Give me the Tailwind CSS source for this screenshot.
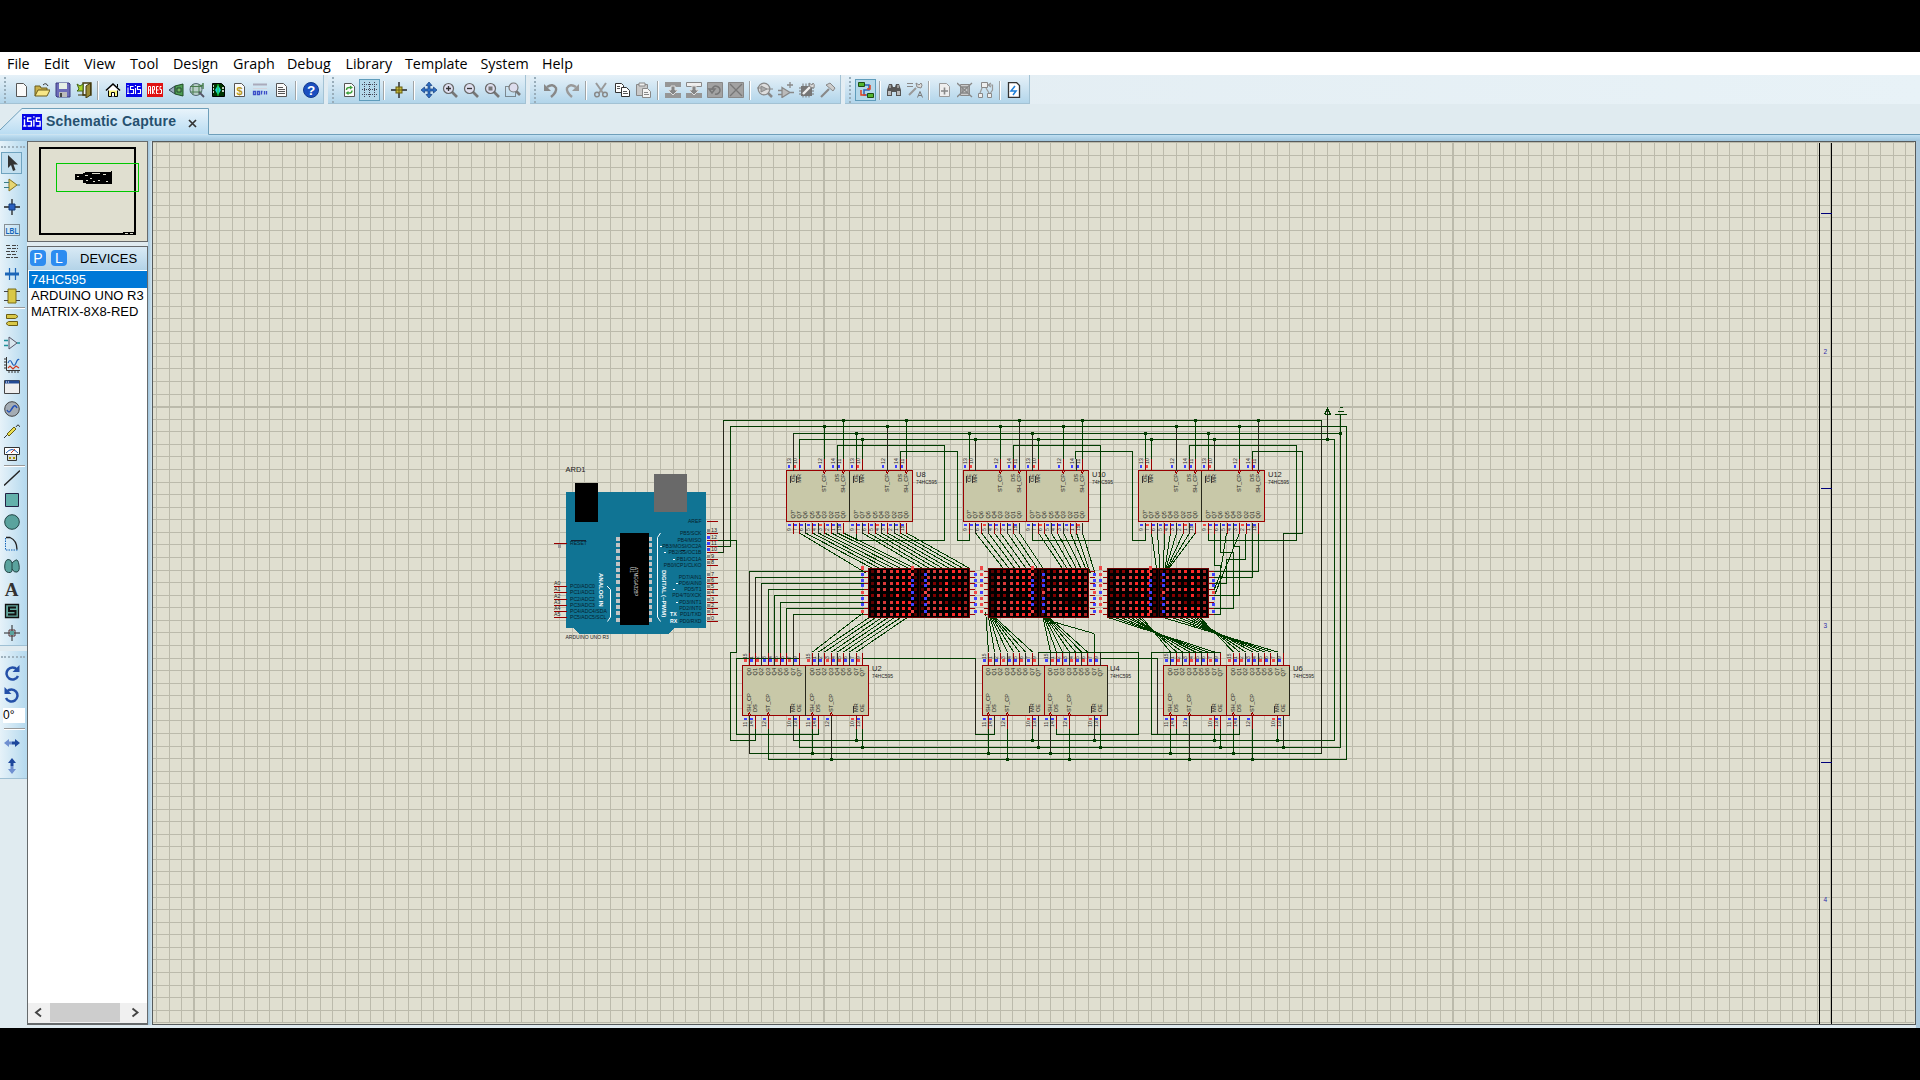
<!DOCTYPE html>
<html lang="en">
<head>
<meta charset="utf-8">
<title>Schematic Capture</title>
<script src="https://cdn.jsdelivr.net/npm/@tailwindcss/browser@4"></script>
</head>
<body class="bg-black w-[1920px] h-[1080px] overflow-hidden pt-[52px] font-['Liberation_Sans',sans-serif]">
<div class="w-full h-[976px] bg-[#e0ebf0] flex flex-col">

  <nav class="h-[23px] bg-white flex items-center pl-[7px] text-[14.3px] text-black font-['Open_Sans','Noto_Sans',sans-serif] shrink-0 leading-none pt-[2px]">
    <span class="w-[37px]">File</span><span class="w-[40px]">Edit</span><span class="w-[46px]">View</span><span class="w-[43px]">Tool</span><span class="w-[60px]">Design</span><span class="w-[54px]">Graph</span><span class="w-[58.5px]">Debug</span><span class="w-[59.5px]">Library</span><span class="w-[75.500px]">Template</span><span class="w-[61.500px]">System</span><span>Help</span>
  </nav>

  <div id="bars" class="h-[29px] flex gap-1 shrink-0 bg-gradient-to-r from-[#e0eaf0] to-[#e8f2f7]"></div>

  <div class="h-[31px] shrink-0 relative flex items-end">
    <svg class="absolute left-0 top-0 w-[1920px] h-[31px]" viewBox="0 104 1920 31">
      <defs><linearGradient id="tg" x1="0" y1="0" x2="0" y2="1"><stop offset="0" stop-color="#e9f4fb"/><stop offset="1" stop-color="#b9dcf2"/></linearGradient></defs>
      <path d="M0 134.500V130L22 108.500H208.500V134.500Z" fill="url(#tg)"/>
      <path d="M0 130L22 108.500H208.500V134.500H1920" fill="none" stroke="#6f9fba"/>
    </svg>
    <div class="relative flex items-center h-[27px] pl-[22px] text-[#25506f]">
      <span data-icon="isis" class="w-[20px] h-[16px]"></span>
      <span class="text-[14px] font-bold tracking-[0.2px] ml-[4px] w-[142px] whitespace-nowrap">Schematic Capture</span>
      <svg class="w-[9px] h-[9px] mt-[3px]" viewBox="0 0 9 9"><path d="M1 1L8 8M8 1L1 8" stroke="#333" stroke-width="1.700"/></svg>
    </div>
  </div>
  <div class="h-[6px] shrink-0 bg-gradient-to-b from-[#c0e0f3] to-[#9fc4dc]"></div>

  <main class="flex h-[887px] bg-[#e0ebf0]">
    <aside class="w-[27px] shrink-0 flex flex-col">
      <div id="side" class="w-[27px] h-[505px] bg-gradient-to-r from-[#e6f2f9] to-[#b4d9ee] flex flex-col items-start pl-px border-b border-[#9fc0d4]"></div>
      <div id="side2" class="mt-[5px] w-[27px] h-[128px] bg-gradient-to-r from-[#e6f2f9] to-[#b4d9ee] flex flex-col items-start pl-px border-b border-[#9fc0d4]"></div>
    </aside>
    <section class="w-[121px] shrink-0 flex flex-col gap-[4px] h-[884px]">
      <div class="h-[101px] border border-[#666a6c] bg-[#e0dfd0] shrink-0">
        <svg class="w-[119px] h-[99px]" viewBox="28 142 119 99" shape-rendering="crispEdges">
          <rect x="40" y="148" width="95" height="86" fill="none" stroke="#000" stroke-width="2"/>
          <rect x="123" y="232" width="11" height="3"/><path d="M125 233.500h3M130 233.500h3" stroke="#e0dfd0"/>
          <rect x="75" y="174" width="8" height="6"/><rect x="83" y="172" width="29" height="12"/>
          <path d="M77 176.500h2M85 175.500h3M92 173.500h8M103 174.500h3M86 180.500h2M93 181.500h2M98 180.500h2M106 181.500h2M90 178.500h2M83 183.500h3M83 172.500h2" stroke="#e0dfd0"/>
          <path d="M111.500 171v3" stroke="#000"/>
          <rect x="56.500" y="163.500" width="82" height="28" fill="none" stroke="#00c800"/>
        </svg>
      </div>
      <div class="grow border border-b-2 border-[#666a6c] bg-white flex flex-col overflow-hidden">
        <div class="h-[23px] shrink-0 bg-gradient-to-b from-[#d9eaf5] to-[#b3d3e8] flex items-center pl-[2px] pb-px text-white text-[13px] leading-none">
          <span class="w-[16px] h-[16px] rounded bg-[#2d8cf0] flex items-center justify-center text-[14px]">P</span>
          <span class="w-[16px] h-[16px] rounded bg-[#2d8cf0] flex items-center justify-center text-[14px] ml-[5px]">L</span>
          <span class="text-black ml-[13px] text-[13px]">DEVICES</span>
        </div>
        <div class="text-[13px] leading-[16px] text-black whitespace-nowrap pl-px pt-px">
          <div class="bg-[#0078d7] text-white pl-[2px] pt-px">74HC595</div>
          <div class="pl-[2px]">ARDUINO UNO R3</div>
          <div class="pl-[2px]">MATRIX-8X8-RED</div>
        </div>
        <div class="mt-auto h-[20px] bg-[#f0f0f0] flex items-start">
          <svg class="w-[22px] h-[19px]" viewBox="0 0 22 19"><path d="M13 5.500L8 9.500L13 13.500" fill="none" stroke="#444" stroke-width="1.900"/></svg>
          <div class="w-[70px] h-[19px] bg-[#cdcdcd]"></div>
          <svg class="w-[27px] h-[19px]" viewBox="0 0 27 19"><path d="M12.500 5.500L17.500 9.500L12.500 13.500" fill="none" stroke="#444" stroke-width="1.900"/></svg>
        </div>
      </div>
    </section>
    <div class="w-[4px] h-[884px] bg-gradient-to-r from-[#9fc4dc] to-[#d4e6f0] shrink-0"></div>
    <section class="w-[1764px] h-[884px] border border-[#565b5c] bg-[#e0dfd0] shrink-0">
      <svg id="sheet" class="block w-[1762px] h-[882px]" viewBox="153 142 1762 882" font-family="Liberation Sans, Arial, sans-serif"></svg>
    </section>
    <div class="w-[4px] h-[887px] bg-[#abc9dd]"></div>
  </main>
</div>

<script>
const page = '<path d="M3.500 1.500h7l3 3v10h-10z" fill="#fafafa" stroke="#555"/>';
const gpage = '<path d="M3.500 1.500h7l3 3v10h-10z" fill="#eee" stroke="#999"/>';
const mag = '<path d="M10 10l5 5" stroke="#777" stroke-width="2.600"/><circle cx="6.500" cy="6.500" r="5" fill="#dde" stroke="#666" stroke-width="1.200"/>';
const I = {
 new: page,
 open: '<path d="M1 14V4h5l1 2h6v2" fill="#c9b04a" stroke="#6b5d1c"/><path d="M1 14l3-6h12l-3 6z" fill="#f7e687" stroke="#6b5d1c"/><path d="M9 3q3-3 5 1" fill="none" stroke="#333"/>',
 save: '<path d="M1 1h13l1 1v13H2l-1-1z" fill="#6c6bb8" stroke="#3d3c80"/><path d="M4 1h8v6H4z" fill="#e6f0e6"/><path d="M4 10h8v5H4z" fill="#bbb"/><path d="M5 11h2v4H5z" fill="#444"/>',
 exit: '<path d="M7 1h8v12H7z" fill="#eef4f8" stroke="#443b0e" stroke-width="1.400"/><path d="M10 4l4.500-3v12l-4.500 3z" fill="#9a8b35" stroke="#443b0e"/><path d="M1 2l3 2 3-2v7H1l2-2z" fill="#a9d62a" stroke="#44661a"/><path d="M2 13h7" stroke="#443b0e"/>',
 home: '<path d="M3.500 8v6.500h9V8" fill="#f8f27c" stroke="#000"/><path d="M1 8.500L8 2l7 6.500" fill="#fff" stroke="#000" stroke-width="1.600"/><path d="M6.500 14.500v-4h3v4M12.500 2v3" fill="#fff" stroke="#000"/>',
 isis: '<path d="M0 1h16v14H0z" fill="#0505e6"/><path d="M2 5.500v6M1 11.500h2.500M2 3v1M7.500 4.500h-3v3h3v4h-3M9.500 6v6M9.500 3v1M14.500 4.500h-3v3h3v4h-3" stroke="#fff" fill="none" stroke-width="1.100"/>',
 ares: '<path d="M0 1h16v14H0z" fill="#e01212"/><path d="M1.500 12V4.500h2V12M1.500 8h2M5.500 12V4.500h2V8h-2l2 4M11.500 4.500h-2v7h2M9.500 8h2M14.500 4.500h-1.500v3h1.500v4h-2" stroke="#fff" fill="none"/>',
 cone: '<path d="M1 8l6-4v8z" fill="#9ab" stroke="#345"/><path d="M7 4l8-2v12l-8-2z" fill="#4f9d54" stroke="#1f4d25"/><path d="M9 6h4v4H9z" fill="#7b6" stroke="#243"/>',
 globe: '<circle cx="7" cy="7.500" r="6" fill="#b8cfc8" stroke="#567"/><path d="M1 4.500h12M1 10h12M4 2v11M10 2v11" stroke="#4b7d50"/><path d="M10 10l5 5" stroke="#556" stroke-width="1.800"/><path d="M11 3.500h3M14 1v6" stroke="#4b7d50" stroke-width="1.500"/>',
 chip: '<path d="M2.500 1.500h9l3 3v10h-12z" fill="#030" stroke="#000"/><path d="M3 4h1M3 7h1M3 10h1M12 6h2M12 9h2" stroke="#fff" stroke-width="1.500"/><path d="M8 3l3 5-3 5-3-5z" fill="#18d0d8"/><path d="M8 2v12" stroke="#1bd41b"/>',
 bill: page + '<text x="8.500" y="12.500" font-size="11" font-weight="bold" text-anchor="middle" fill="#b99a1c">$</text>',
 code: '<path d="M1 2.500h14" stroke="#aab" stroke-width="2"/><path d="M1 6.500h14" stroke="#d5d5dd"/><path d="M1.500 9.500h2v3h-2zM5.500 9.500h2v3h-2zM9.500 12.500v-3h1M12.500 9v3.500M14.500 9v3.500" fill="none" stroke="#3c4fc8" stroke-width="1.300"/>',
 notes: page + '<path d="M5 5.500h5M5 7.500h7M5 9.500h7M5 11.500h7" stroke="#555"/>',
 help: '<circle cx="8" cy="8" r="7.500" fill="#1b4fc0" stroke="#113a8c"/><text x="8" y="12.800" font-size="13.500" font-weight="bold" text-anchor="middle" fill="#fff">?</text>',
 refresh: page + '<path d="M5.500 8q0-3 4-2.500M11 8.500q0 3-4 2.500" fill="none" stroke="#3aa03a" stroke-width="1.500"/><path d="M9 3.500l3 2-3 2zM7.500 9l-3 2 3 2z" fill="#3aa03a"/>',
 grid: '<g shape-rendering="crispEdges"><path d="M0 2.500h16M0 7.500h16M0 12.500h16" stroke="#445" stroke-dasharray="1 1"/><path d="M2.500 0v16M7.500 0v16M12.500 0v16" stroke="#445" stroke-dasharray="1 1"/></g>',
 origin: '<path d="M8 0v16M0 8h16" stroke="#222" stroke-width="1.400"/><rect x="5" y="5" width="6" height="6" fill="#c8bc3c" stroke="#665c10"/><path d="M8 5v6M5 8h6" stroke="#665c10"/>',
 pan: '<path d="M8 0l3 3.500H9v3.500h3.500V5L16 8l-3.500 3V9H9v3.500h2L8 16l-3-3.500h2V9H3.500v2L0 8l3.500-3v2H7V3.500H5z" fill="#2d6fc4" stroke="#173f80" stroke-width=".7"/>',
 zin: mag + '<path d="M4 6.500h5M6.500 4v5" stroke="#333" stroke-width="1.300"/>',
 zout: mag + '<path d="M4 6.500h5" stroke="#333" stroke-width="1.300"/>',
 zall: mag + '<path d="M4.500 4.500h4v4h-4z" fill="#777"/>',
 zarea: '<path d="M.5 4.500h10v10h-10z" fill="none" stroke="#333" stroke-dasharray="1 1"/><path d="M11 9l4 4" stroke="#777" stroke-width="2.600"/><circle cx="8.500" cy="5.500" r="4.500" fill="#dde" stroke="#777" stroke-width="1.200"/>',
 undo: '<path d="M4 5q6-4 9 1 1 4-5 9" fill="none" stroke="#888" stroke-width="2.400"/><path d="M1 2v7h7z" fill="#888"/>',
 redo: '<path d="M12 5q-6-4-9 1-1 4 5 9" fill="none" stroke="#999" stroke-width="2.400"/><path d="M15 2v7H8z" fill="#999"/>',
 cut: '<path d="M3 1l7 10M13 1L6 11" stroke="#999" stroke-width="2"/><circle cx="4" cy="12.500" r="2.300" fill="none" stroke="#888" stroke-width="1.500"/><circle cx="12" cy="12.500" r="2.300" fill="none" stroke="#888" stroke-width="1.500"/>',
 copy: '<path d="M1.500 1.500h6l2 2v7h-8z" fill="#fff" stroke="#333"/><path d="M7.500 5.500h5l3 3v6h-8z" fill="#fff" stroke="#333"/><path d="M3 4.500h3M3 6.500h3M9 9.500h4M9 11.500h5" stroke="#555"/>',
 paste: '<path d="M1.500 2.500h11v11h-11z" fill="#c8c8c8" stroke="#888"/><path d="M4 1h6v3H4z" fill="#eee" stroke="#888"/><path d="M7.500 6.500h5l3 3v6h-8z" fill="#f4f4f4" stroke="#888"/><path d="M9 10.500h4M9 12.500h5" stroke="#888"/>',
 blk1: '<path d="M0 0h16v5H0zM0 11h16v5H0z" fill="#969696"/><path d="M6 4h4v4h3l-5 5-5-5h3z" fill="#858585" stroke="#ddd"/>',
 blk2: '<path d="M.5 .5h15v4H.5z" fill="#eee" stroke="#888"/><path d="M0 11h16v5H0z" fill="#969696"/><path d="M6 4h4v4h3l-5 5-5-5h3z" fill="#858585" stroke="#ddd"/>',
 blk3: '<path d="M.5 .5h15v15H.5z" fill="#a2a2a2" stroke="#888"/><path d="M5 8a4 4 0 1 1 3 4M2 7l3 4 3-4z" fill="none" stroke="#777" stroke-width="1.500"/>',
 blk4: '<path d="M.5 .5h15v15H.5z" fill="#a2a2a2" stroke="#888"/><path d="M2 2l12 12M14 2L2 14" stroke="#777" stroke-width="1.300"/>',
 pick: '<circle cx="7" cy="7" r="5.800" fill="#ddd" stroke="#888" stroke-width="1.300"/><path d="M4 4l6 3-6 3zM0 6h4M10 7h6" fill="#aaa" stroke="#888"/><path d="M11 11l4 4" stroke="#888" stroke-width="2.500"/>',
 make: '<path d="M4 5.500l8 5-8 5zM0 8.500h4M0 12.500h4M12 10.500h4M12 0v6M9 3h6" fill="#bbb" stroke="#888" stroke-width="1.300"/>',
 pack: '<path d="M2 4h11v10H2z" fill="#777"/><path d="M4 1.500v14M7 1.500v14M10 1.500v14M0 6h15M0 9h15M0 12h15" stroke="#777"/><path d="M4 12l7-7" stroke="#eee" stroke-width="2.400"/><path d="M10 1l1 4 4 1q1-4-1-5l-1 2z" fill="#ddd" stroke="#888"/>',
 hammer: '<path d="M1 15l8-8" stroke="#888" stroke-width="2.200"/><path d="M6 3l4-2 5 5-2 3z" fill="#ccc" stroke="#888"/>',
 wire: '<path d="M4 3h7v5H6v5h5" fill="none" stroke="#2b62b8" stroke-width="1.500"/><path d="M12 3v4H9M3 8v5h5" fill="none" stroke="#e04020" stroke-width="1.500"/><path d="M.5 .5h6v4h-6zM9.500 11.500h6v4h-6z" fill="#52b52e" stroke="#1c4d12"/>',
 binoc: '<path d="M1 14V8l2-6h3l1 3h2l1-3h3l2 6v6h-5v-4H6v4z" fill="#555"/><path d="M2 9h3v4H2zM11 9h3v4h-3z" fill="#bbb"/><path d="M4 3v3M12 3v3" stroke="#ddd"/>',
 prop: '<path d="M0 1.500h6M0 4.500h6" stroke="#888"/><path d="M2 13l7-7" stroke="#999" stroke-width="2"/><path d="M9 1l1 4 4 1q2-3 0-5l-2 2z" fill="#ddd" stroke="#888"/><path d="M10.500 15.500l2.500-6 2.500 6M11.500 13.500h3" fill="none" stroke="#777"/>',
 addp: gpage + '<path d="M8.500 5.500v7M5 9h7" stroke="#888" stroke-width="1.600"/>',
 delp: '<path d="M3.500 2.500h9v11h-9z" fill="#ccc" stroke="#888"/><path d="M0 1l15 14M15 1L0 15M5 5h6v6H5z" fill="none" stroke="#888" stroke-width="1.300"/>',
 hier: '<path d="M3.500 .5h6v5h-6zM.5 11.500h4v4h-4zM9.500 11.500h4v4h-4z" fill="#eee" stroke="#888"/><path d="M4 6l-2 5M8 6l3 5M11 3h3.500v5l-2 3M13 1l-3 2 3 2" stroke="#999" fill="none" stroke-width="1.200"/>',
 erc: '<path d="M2.500 .5h8l3 3v12h-11z" fill="#fff" stroke="#333" stroke-width="1.300"/><path d="M9 4L5 9h5l-3 4" fill="none" stroke="#1f7fd8" stroke-width="1.500"/>',
 arrow: '<path d="M4 0v13l3-3 2 6 2.500-1L9.500 9.500H14z" fill="#333"/>',
 amp: '<path d="M5 2l8 6-8 6z" fill="#e6d673" stroke="#857421"/><path d="M0 5.500h5M0 10.500h5M13 8h3" stroke="#3b7c86"/>',
 junc: '<path d="M8 0v16M0 8h16" stroke="#222" stroke-width="1.300"/><path d="M5 5h6v6H5z" fill="#2a60c0" stroke="#123a78"/>',
 lbl: '<path d="M.5 2.500h15v11H.5z" fill="none" stroke="#333" stroke-dasharray="1 1"/><text x="8" y="11.500" font-size="9" font-weight="bold" text-anchor="middle" fill="#1565b8" textLength="13" lengthAdjust="spacingAndGlyphs">LBL</text>',
 txt: '<path d="M2 1.500h5M8 1.500h6M3 4.500h11M2 7.500h11M3 10.500h10M2 13.500h7M10 13.500h4" stroke="#444" stroke-dasharray="4 1"/>',
 bus: '<path d="M1 8h14" stroke="#1c66b8" stroke-width="3"/><path d="M5.500 2v12M11.500 2v12" stroke="#1c66b8" stroke-width="1.200"/>',
 sub: '<path d="M4 1h8v14H4z" fill="#d9c847" stroke="#7b6d14"/><path d="M0 3.500h4M0 12.500h4M12 3.500h4M12 12.500h4" stroke="#444"/>',
 term: '<path d="M2.500 2.500h9l2.500 2-2.500 2h-9zM13.500 9.500h-9l-2.500 2 2.500 2h9z" fill="#d9c847" stroke="#6b5d14"/>',
 pin: '<path d="M5 2l8 6-8 6z" fill="#d8e6ee" stroke="#556"/><path d="M0 5.500h4M0 10.500h4M13 8h3" stroke="#1d8f99" stroke-width="1.300"/>',
 graph: '<path d="M2.500 0v13.500H16M0 2h2M0 5h2M0 8h2M0 11h2M5 14v2M8 14v2M11 14v2M14 14v2" fill="none" stroke="#333"/><path d="M4 6q2-5 4 0t4 0 3-3" fill="none" stroke="#2060b8" stroke-width="1.200"/><path d="M4 11l2-2 3 3 3-3 3 2" fill="none" stroke="#d03a20" stroke-width="1.200"/>',
 tape: '<path d="M.5 1.500h15v13H.5z" fill="#eee" stroke="#444"/><path d="M1 3h14" stroke="#234a94" stroke-width="3"/><path d="M2 3h4" stroke="#fff" stroke-dasharray="1 1"/>',
 gen: '<circle cx="8" cy="8" r="7.300" fill="#a4acb4" stroke="#444"/><path d="M3 9q2 4 4 0l2-3q2-3 4 1" fill="none" stroke="#2451b5" stroke-width="1.500"/>',
 probe: '<path d="M0 15l4-4M12 4q2-4 4 0" stroke="#333" fill="none"/><path d="M3 11l7-7 2 2-7 7z" fill="#e9de52" stroke="#665c10"/>',
 inst: '<path d="M.5 1.500h15v7H.5z" fill="#fff" stroke="#333"/><path d="M2 7q6-7 12 0" fill="none" stroke="#2060b8"/><path d="M7 7l4-4" stroke="#d03a20"/><path d="M3.500 8.500h9v6h-9z" fill="#ddd" stroke="#333"/><path d="M5 12h2M9 12h2" stroke="#a90" stroke-width="2"/>',
 line: '<path d="M0 15.500L16 .5" stroke="#222" stroke-width="1.400"/>',
 box: '<path d="M1.500 1.500h13v13h-13z" fill="#63b0ab" stroke="#224"/>',
 circ: '<circle cx="8" cy="8" r="7.300" fill="#5aa39e" stroke="#244"/>',
 arc: '<path d="M1.500 2v12h12" fill="none" stroke="#1565b8" stroke-dasharray="1.500 1"/><path d="M2 1.500h4q7 3 7 12" fill="none" stroke="#222" stroke-width="1.300"/>',
 path: '<path d="M8 5Q7 1 4 1.500T.7 8 4.500 14.500 8 11q2 4 5 3t2-7-3-5-4 3" fill="#5aa39e" stroke="#244"/><path d="M8 5v6" stroke="#244"/>',
 A: '<text x="7.500" y="14.500" font-size="19" font-weight="bold" font-family="Liberation Serif, serif" text-anchor="middle" fill="#333">A</text>',
 S: '<path d="M1.500 1.500h13v13h-13z" fill="#63a89f" stroke="#111" stroke-width="1.300"/><path d="M12 4.500H5v3.500h6.500v3.500H4" fill="none" stroke="#111" stroke-width="2"/>',
 mark: '<path d="M8 0v16M0 8h16" stroke="#222"/><path d="M5 5h6v6H5z" fill="none" stroke="#533"/><path d="M6 6h4v4H6z" fill="#5aa39e"/>',
 cw: '<path d="M13 4.500a6 6 0 1 0 1 6.500" fill="none" stroke="#2450a8" stroke-width="2.500"/><path d="M15.500 0v7H8.500z" fill="#2450a8"/>',
 ccw: '<path d="M3 4.500a6 6 0 1 1-1 6.500" fill="none" stroke="#2450a8" stroke-width="2.500"/><path d="M.5 0v7h7z" fill="#2450a8"/>',
 hm: '<path d="M0 8l5-4v2.500h3v3H5V12z" fill="#6f8fd0"/><path d="M16 8l-5-4v2.500H8v3h3V12z" fill="#1d479c"/>',
 vm: '<path d="M8 0L4 5h2.500v3h3V5H12z" fill="#1d479c"/><path d="M8 16l-4-5h2.500V8h3v3H12z" fill="#6f8fd0"/>'
};
const icon = n => `<svg viewBox="0 0 16 16" width="16" height="16">${I[n]}</svg>`;
document.querySelectorAll('[data-icon]').forEach(e => e.innerHTML = `<svg viewBox="0 1 16 14" width="20" height="16" preserveAspectRatio="none">${I[e.dataset.icon]}</svg>`);

const groups = [
 ['w-[324px]', 'w-[8.5px]', 'new open save exit | home isis ares cone globe chip bill code notes | help'],
 ['w-[198px]', 'w-[8.5px]', 'refresh *grid | origin | pan zin zout zall zarea'],
 ['w-[311px]', 'w-[8.5px]', 'undo redo | cut copy paste | blk1 blk2 blk3 blk4 | pick make pack hammer'],
 ['w-[185px]', 'w-[7.5px]', '*wire | binoc prop | addp delp hier | erc']
];
document.getElementById('bars').innerHTML = groups.map(([w, s, list]) =>
 `<div class="${w} h-[29px] pt-[2px] bg-gradient-to-b from-[#e6f1f8] to-[#b2d5ea] border-r border-b border-[#a3c2d4] flex items-center">
  <span class="w-[10px] h-full shrink-0 flex justify-center"><span class="w-[2px] h-[26px] border-l-2 border-dotted border-[#98adba]"></span></span>` +
 list.split(' ').map(n => n === '|' ? `<span class="${s} shrink-0 flex justify-center"><span class="w-[2px] h-[19px] bg-[#a0a4a6] border-r border-white"></span></span>`
  : n[0] === '*' ? `<span class="w-[21px] h-[22px] shrink-0 flex items-center justify-center bg-[#b4d8ea] border border-[#5f9cbb]">${icon(n.slice(1))}</span>`
  : `<span class="w-[21px] shrink-0 flex items-center justify-center">${icon(n)}</span>`).join('') + '</div>').join('');

const grip = '<span class="w-[24px] h-[11px] shrink-0 flex items-center"><span class="w-full border-t-2 border-dotted border-[#9fb2be]"></span></span>';
const cell = n => n === '|' ? '<span class="w-[21px] ml-[3px] h-[2px] shrink-0 bg-[#999] border-b border-white"></span>'
 : n[0] === '*' ? `<span class="w-[21px] h-[22.2px] shrink-0 flex items-center justify-center bg-[#c3dfef] border border-[#6fa3bf]">${icon(n.slice(1))}</span>`
 : `<span class="w-[21px] h-[22.2px] shrink-0 flex items-center justify-center">${icon(n)}</span>`;
document.getElementById('side').innerHTML = grip + '*arrow amp junc lbl txt bus sub | term pin graph tape gen probe inst | line box circ arc path A S mark'.split(' ').map(cell).join('');
document.getElementById('side2').innerHTML = grip + cell('cw') + cell('ccw') +
 '<span class="ml-[2px] w-[22px] h-[15px] mt-[2px] mb-[5px] shrink-0 bg-white text-[12px] leading-[15px]">0°</span>' + cell('|') + '<span class="h-[2px] shrink-0"></span>' + cell('hm') + cell('vm');

/* ---------- schematic sheet ---------- */
let o = '';
const G = '#003c00', K = '#26261a', R = '#990000';
const px = v => Math.floor(v) + .5;
const P = (pts, c = G) => { o += `<path d="M${pts.map(p => px(p[0]) + ' ' + px(p[1])).join('L')}" fill="none" stroke="${c}"/>`; };
const D = (x1, y1, x2, y2) => { o += `<path d="M${x1} ${y1}L${x2} ${y2}" stroke="${G}"/>`; };
const B = (x, y, w, h, f, s) => { o += `<rect x="${x}" y="${y}" width="${w}" height="${h}" fill="${f}"${s ? ` stroke="${s}"` : ''}/>`; };
const T = (x, y, s, size, c = '#222', extra = '') => { o += `<text x="${x}" y="${y}" font-size="${size}" fill="${c}" ${extra}>${s}</text>`; };
const V = (x, y, s, size, anchor = 'start', c = '#222', a = -90, extra = '') => T(0, 0, s, size, c, `text-anchor="${anchor}" transform="translate(${x + (a < 0 ? 2 : 0)} ${y}) rotate(${a})" ${extra}`);
const dot = (x, y) => B(Math.floor(x) - 1, Math.floor(y) - 1, 3, 3, G);
const BL = '#4040ff', RD = '#f04848';

o += '<g shape-rendering="crispEdges">';
const step = 12.575;
for (let k = -53; k < 90; k++) {
  const x = 824.3 + k * (k < 0 ? 12.6 : step); if (x < 153 || x > 1914) continue;
  o += `<path d="M${px(x)} 142V1023" stroke="#bbbaab" stroke-width="1"/>`;
  if (k % 50 === 0) o += `<path d="M${px(x) - 1} 142V1023" stroke="#bbbaab"/>`;
}
for (let k = -22; k < 50; k++) {
  const y = 406.6 + k * step; if (y < 142 || y > 1023) continue;
  o += `<path d="M153 ${px(y)}H1914" stroke="#bbbaab"/>`;
  if (k === 0) o += `<path d="M153 ${px(y) + 1}H1914" stroke="#bbbaab"/>`;
}
P([[1819, 142], [1819, 1024]], '#000'); P([[1831, 142], [1831, 1024]], '#000');
[213, 488, 762].forEach(y => P([[1820, y], [1831, y]], '#00007a'));
o += '</g>';
T(1823.500, 353.500, '2', 6.500, '#2a2aa8'); T(1823.500, 627.500, '3', 6.500, '#2a2aa8'); T(1823.500, 902, '4', 6.500, '#2a2aa8');

o += '<g shape-rendering="crispEdges">';
/* supply rails */
P([[717, 552], [723, 552], [723, 420], [1321, 420], [1321, 753], [749, 753]]);
P([[717, 546], [730, 546], [730, 426], [1346, 426], [1346, 759], [768, 759]]);
P([[793, 460], [793, 433], [1340, 433]]); P([[1340, 414], [1340, 747], [799, 747]]);
P([[799, 460], [799, 439], [1334, 439], [1334, 740], [793, 740]]);
P([[723, 552], [723, 421]], K); P([[793, 460], [793, 434]], K); P([[799, 460], [799, 440]], K); P([[1321, 421], [1321, 753]], K);
P([[1327, 439], [1327, 408]], K); P([[1324, 414], [1327, 408], [1330, 414], [1324, 414]]);
P([[1334, 414], [1346, 414]]); P([[1337, 411], [1343, 411]]); P([[1339, 407], [1342, 407]]);
dot(1340, 433); dot(1327, 439);
/* serial chain */
P([[717, 540], [736, 540], [736, 652], [730, 652], [730, 740], [755, 740], [755, 728]]);
P([[799, 658], [736, 658], [736, 734], [818, 734], [818, 728]]);
P([[862, 658], [975, 658], [975, 734], [994, 734], [994, 728]]);
P([[1037, 652], [1138, 652], [1138, 734], [1056, 734], [1056, 728]]);
P([[1100, 658], [1157, 658], [1157, 734], [1176, 734], [1176, 728]]);
P([[1220, 652], [1151, 652], [1151, 734], [1239, 734], [1239, 728]]);
P([[1283, 652], [1283, 533], [1302, 533], [1302, 451], [1252, 451], [1252, 458]]);
P([[1283, 652], [1283, 534]], K); P([[1157, 659], [1157, 733]], K); P([[975, 659], [975, 733]], K);
P([[1208, 533], [1208, 540], [1296, 540], [1296, 445], [1189, 445], [1189, 458]]);
P([[1145, 533], [1145, 540], [1132, 540], [1132, 451], [1075, 451], [1075, 458]]);
P([[1032, 533], [1032, 540], [1100, 540], [1100, 445], [1013, 445], [1013, 458]]);
P([[969, 533], [969, 540], [957, 540], [957, 451], [900, 451], [900, 458]]);
P([[856, 533], [856, 540], [944, 540], [944, 445], [837, 445], [837, 458]]);
/* row wires of the left display */
[749, 755, 761, 768, 774, 780, 786, 793].forEach((x, i) => {
  const y = [571, 577, 583, 589, 595, 602, 608, 614][i];
  P([[x, 652], [x, y], [868, y]]); if (i < 3 || i === 7) P([[x, 652], [x, y + 1]], K);
});
/* diagonals */
const q = [13, 19, 26, 32, 38, 45, 51, 57];
q.forEach((d, i) => {
  D(786.5 + d, 533, [866, 872, 879, 886, 893, 900, 908, 914][i], [573, 568, 568, 568, 568, 568, 568, 568][i]);
  D(849.5 + d, 533, 922 + i * 6.7, 568);
  D(962.5 + d, 533, 1003 + i * 5.7, 568);
  D(1025.5 + d, 533, 1062 + i * 4.7, i > 5 ? 573 : 568);
  D(1138.5 + d, 533, [1156.5, 1160, 1163.5, 1165, 1166, 1167, 1168, 1169][i], 568);
});
P([[1214, 533], [1214, 565], [1220, 565], [1220, 614], [1210, 614]]);
P([[1220, 533], [1220, 552], [1233, 552], [1233, 608], [1210, 608]]);
P([[1233, 533], [1233, 546], [1239, 546], [1239, 595], [1210, 595]]);
P([[1245, 533], [1245, 559], [1226, 559], [1226, 583], [1210, 583]]);
P([[1252, 533], [1252, 577], [1210, 577]]); P([[1258, 533], [1258, 571], [1210, 571]]);
D(1226.5, 533, 1220, 575); D(1220, 575, 1214, 590); D(1239.5, 533, 1215, 594);
const q2 = [7, 13, 19, 26, 32, 38, 44, 51];
q2.forEach((d, i) => {
  D(805.5 + d, 652, 863 + i * 6.3, i ? 617.5 : 613);
  D(981.5 + d, 652, [985.7, 988.6, 990, 991, 992, 993, 994, 995][i], i ? 617.5 : 612);
  if (i < 7) D(1043.5 + d, 652, 1043 + i * 1, 617.5);
  D(1163.5 + d, 652, [1142, 1139, 1135, 1131, 1127, 1121, 1115, 1108][i], 617.5);
  D(1226.5 + d, 652, [1200, 1197, 1194, 1190, 1185, 1179, 1172, 1163][i], 617.5);
});
D(1047, 620, 1094, 633.5); P([[1094, 633], [1094, 652]]);

/* shift registers */
const labels = [];
function chip(left, top, idx, dx, w) {
  const up = top ? 470 : 665, lo = top ? 521 : 715;
  const few = top ? [[7, '13'], [13, '10'], [38, '12'], [51, '14'], [57, '11']] : [[7, '11'], [13, '14'], [26, '12'], [51, '10'], [57, '13']];
  const many = top ? [[7, '9'], [13, '7'], [19, '6'], [26, '5'], [32, '4'], [38, '3'], [45, '2'], [51, '1'], [57, '15']] : [[7, '15'], [13, '1'], [19, '2'], [26, '3'], [32, '4'], [38, '5'], [44, '6'], [51, '7'], [57, '9']];
  B(left + .5, up + .5, w, lo - up, '#c8c8a8', R);
  const x = left + dx;
  few.forEach(([d, n], i) => {
    const X = x + d, c = (i + idx) % 3 ? R : K;
    if (top) {
      const y = { '13': 433, '10': 439, '12': 426, '11': 420 }[n];
      if (y) { P([[X, 458], [X, y]], c === K ? K : G); if (!(idx === 0 && i < 2)) dot(X, y); }
      P([[X, 458], [X, 470]], c);
      B(X - 5, 465, 2, 3, n === '10' ? RD : BL);
      labels.push([X - 4, 464, n, 5.2]);
    } else {
      const y = { '11': 753, '12': 759, '10': 740, '13': 747 }[n];
      if (y) { P([[X, 728], [X, y]], c === K ? K : G); if (idx > 0) dot(X, y); }
      P([[X, 715], [X, 728]], c);
      B(X - 5, 718, 3, 2, n === '10' ? RD : BL);
      labels.push([X - 4, 727, n, 5.2]);
    }
    if (n === '11' || n === '12') { const y = top ? up : lo - 2; o += `<path d="M${X - 1} ${y + (top ? 1 : 2)}l1.500 ${top ? 2 : -2}l1.500 ${top ? -2 : 2}" fill="none" stroke="${R}"/>`; }
  });
  many.forEach(([d, n], i) => {
    const X = x + d, c = (i * 2 + idx) % 5 < 3 ? R : K;
    if (top) { P([[X, 522], [X, 533]], c); B(X - 5, 524, 3, 2, (i + idx) % 6 === 5 ? RD : BL); labels.push([X - 4, 531, n, 5]); }
    else { P([[X, 652], [X, 665]], c); B(X - 5, 659, 3, 3, (i * 3 + idx) % 5 < 2 ? RD : BL); labels.push([X - 4, 659, n, 5]); }
  });
  const ctl = top ? { 7: 'OE', 13: 'MR', 38: 'ST_CP', 51: 'DS', 57: 'SH_CP' } : { 7: 'SH_CP', 13: 'DS', 26: 'ST_CP', 51: 'MR', 57: 'OE' };
  for (const d in ctl) labels.push([x + +d, top ? 474 : 712, ctl[d], 5.6, top ? 'end' : 'start']);
  if (top) { P([[x + 4, 475], [x + 4, 482]], '#333'); P([[x + 10, 475], [x + 10, 482]], '#333'); } else P([[x + 48, 705], [x + 48, 712]], '#333');
  many.forEach(([d], i) => labels.push([x + d, top ? 518.5 : 668, top ? (i ? 'Q' + (8 - i) : "Q7'") : (i < 8 ? 'Q' + i : "Q7'"), 5.6, top ? 'start' : 'end']));
}
[[786, 0, 63], [849, 0, 63], [963, -1, 63], [1026, -1, 62], [1138, 0, 63], [1201, 0, 63]].forEach(([x, dx, w], i) => chip(x, true, i, dx, w));
[[742, 0, 63], [805, 0, 63], [982, -1, 62], [1044, -1, 63], [1163, 0, 63], [1226, 0, 63]].forEach(([x, dx, w], i) => chip(x, false, i, dx, w));
P([[849, 471], [849, 521]], K); P([[1201, 471], [1201, 521]], K); P([[805, 666], [805, 715]], K); P([[1107, 666], [1107, 715]], K); P([[1289, 666], [1289, 715]], K);

/* LED displays */
const rows = [571, 577, 583, 589, 595, 602, 608, 614].map(v => v - 1);
const probes = ['BBBRBBR', 'RBBBBBR', 'BBBRBBB', 'BBBRBBB'];
[[868, 6, 44, 57, 107], [988, 7, 44, 55, 106], [1107, 7, 43, 56, 106]].forEach(([x, l, m1, m2, r], mi) => {
  rows.forEach(y => { P([[x - 5, y + 1], [x, y + 1]], R); P([[x + 101, y + 1], [x + 106, y + 1]], R); });
  B(x + .5, 568.5, mi === 1 ? 100 : 101, 49, '#000', '#6a0000');
  for (let c = 0; c < 16; c++) rows.forEach((y, ri) => {
    const cc = c % 8;
    let f = cc === 0 || cc === 7 ? '#5c0000' : cc < 4 ? '#d83a3a' : '#ff2828';
    if ((cc === 1 || cc === 2) && ri % 4 === 0 && mi) f = '#8a0000';
    if ((ri === 4 || (ri === 2 && c > 8)) && (cc + mi) % 3 !== 1) f = '#800000';
    if (ri === 5 && cc > 3 && c > 8) f = '#800000';
    if (c === 15) f = '#a82020';
    B(Math.round(x + 3 + c * 6.2), y, 3, 3, f);
  });
  o += `<path d="M${x + 51.500} 569V617" stroke="#300"/>`;
  [-l, m1, m2, r].forEach((d, pi) => {
    if (pi < 2) B(x + d - 1, 566, 3, 4, RD);
    [573, 579, 584, 591, 597, 603, 610].forEach((y, i) => B(x + d - 1, y, 3, 3, (pi === 0 && mi ? 'RBRBRRR' : probes[pi])[i] === 'R' ? RD : BL));
  });
});

/* Arduino board */
o += '<path d="M566 492H706V628H674L668 634H579L573 628H566Z" fill="#107494"/>';
B(575, 483, 23, 39, '#000'); B(654, 474, 33, 38, '#696969');
for (let i = 0; i < 14; i++) { const y = Math.round(537 + i * 6.2); B(616, y, 4, 4, '#c4c4c4'); B(649, y, 3, 4, '#c4c4c4'); }
B(620, 533, 29, 92, '#000');
const dig = [[521, 'AREF', ''], [533, 'PB5/SCK', 13], [540, 'PB4/MISO', 12], [546, 'PB3/MOSI/OC2A', 11], [552, 'PB2/SS/OC1B', 10], [559, 'PB1/OC1A', 9], [565, 'PB0/ICP1/CLKO', 8], [577, 'PD7/AIN1', 7], [583, 'PD6/AIN0', 6], [589, 'PD5/T1', 5], [595, 'PD4/T0/XCK', 4], [602, 'PD3/INT1', 3], [608, 'PD2/INT0', 2], [614, 'PD1/TXD', 1], [621, 'PD0/RXD', 0]];
dig.forEach(([y, s, n]) => { P([[706, y], [717, y]], R); if (n !== '') B(707, y - 4, 3, 3, n > 9 && n < 13 ? BL : '#8a8a8a'); });
P([[553, 543], [566, 543]], R); B(558, 544, 3, 4, '#999');
[586, 592, 599, 605, 611, 617].forEach(y => P([[553, y], [566, y]], R));
P([[570, 540], [585, 540]], '#123'); P([[680, 550], [684, 550]], '#123');
[546, 552, 559, 583, 589, 602].forEach((y, i) => P([[[659, 663, 672, 675, 672, 675][i], y], [[661, 665, 674, 677, 674, 677][i], y]], '#fff'));
o += '</g>';
o += '<g fill="none" stroke="#fff"><path d="M660.500 533l-3 4.500V617l3 4.500M607 586l3.500 3.500V617l-3 4.500"/></g>';

labels.forEach(([x, y, s, z, a]) => V(x, y, s, z, a || 'start'));
dig.forEach(([y, s, n]) => { T(701.5, y + 2, s, 5.1, '#06212c', 'text-anchor="end"'); T(711, y - 1, n, 5.5); });
T(570, 545, 'RESET', 5.1, '#06212c');
[586, 592, 599, 605, 611, 617].forEach((y, i) => { T(554, y - 1, 'A' + i, 5.2); T(570, y + 2, ['PC0/ADC0', 'PC1/ADC1', 'PC2/ADC2', 'PC3/ADC3', 'PC4/ADC4/SDA', 'PC5/ADC5/SCL'][i], 5.1, '#06212c'); });
V(599, 573, 'ANALOG IN', 6, 'start', '#fff', 90, 'font-weight="bold"');
V(662, 570, 'DIGITAL (~PWM)', 6, 'start', '#fff', 90, 'font-weight="bold"');
V(634, 567, 'ATMEGA328P', 4.5, 'start', '#ddd', 90); V(630, 567, 'U1', 4.5, 'start', '#ddd', 90);
T(670, 616, 'TX', 5.2, '#fff', 'font-weight="bold"'); T(670, 623, 'RX', 5.2, '#fff', 'font-weight="bold"');
T(565.5, 472, 'ARD1', 7.500); T(565.5, 639, 'ARDUINO UNO R3', 5);
[[916, 477, 'U8'], [1092, 477, 'U10'], [1268, 477, 'U12'], [872, 671, 'U2'], [1110, 671, 'U4'], [1293, 671, 'U6']].forEach(([x, y, s]) => { T(x, y, s, 7.5); T(x, y + 7, '74HC595', 5); });
document.getElementById('sheet').innerHTML = o;
</script>
</body>
</html>
